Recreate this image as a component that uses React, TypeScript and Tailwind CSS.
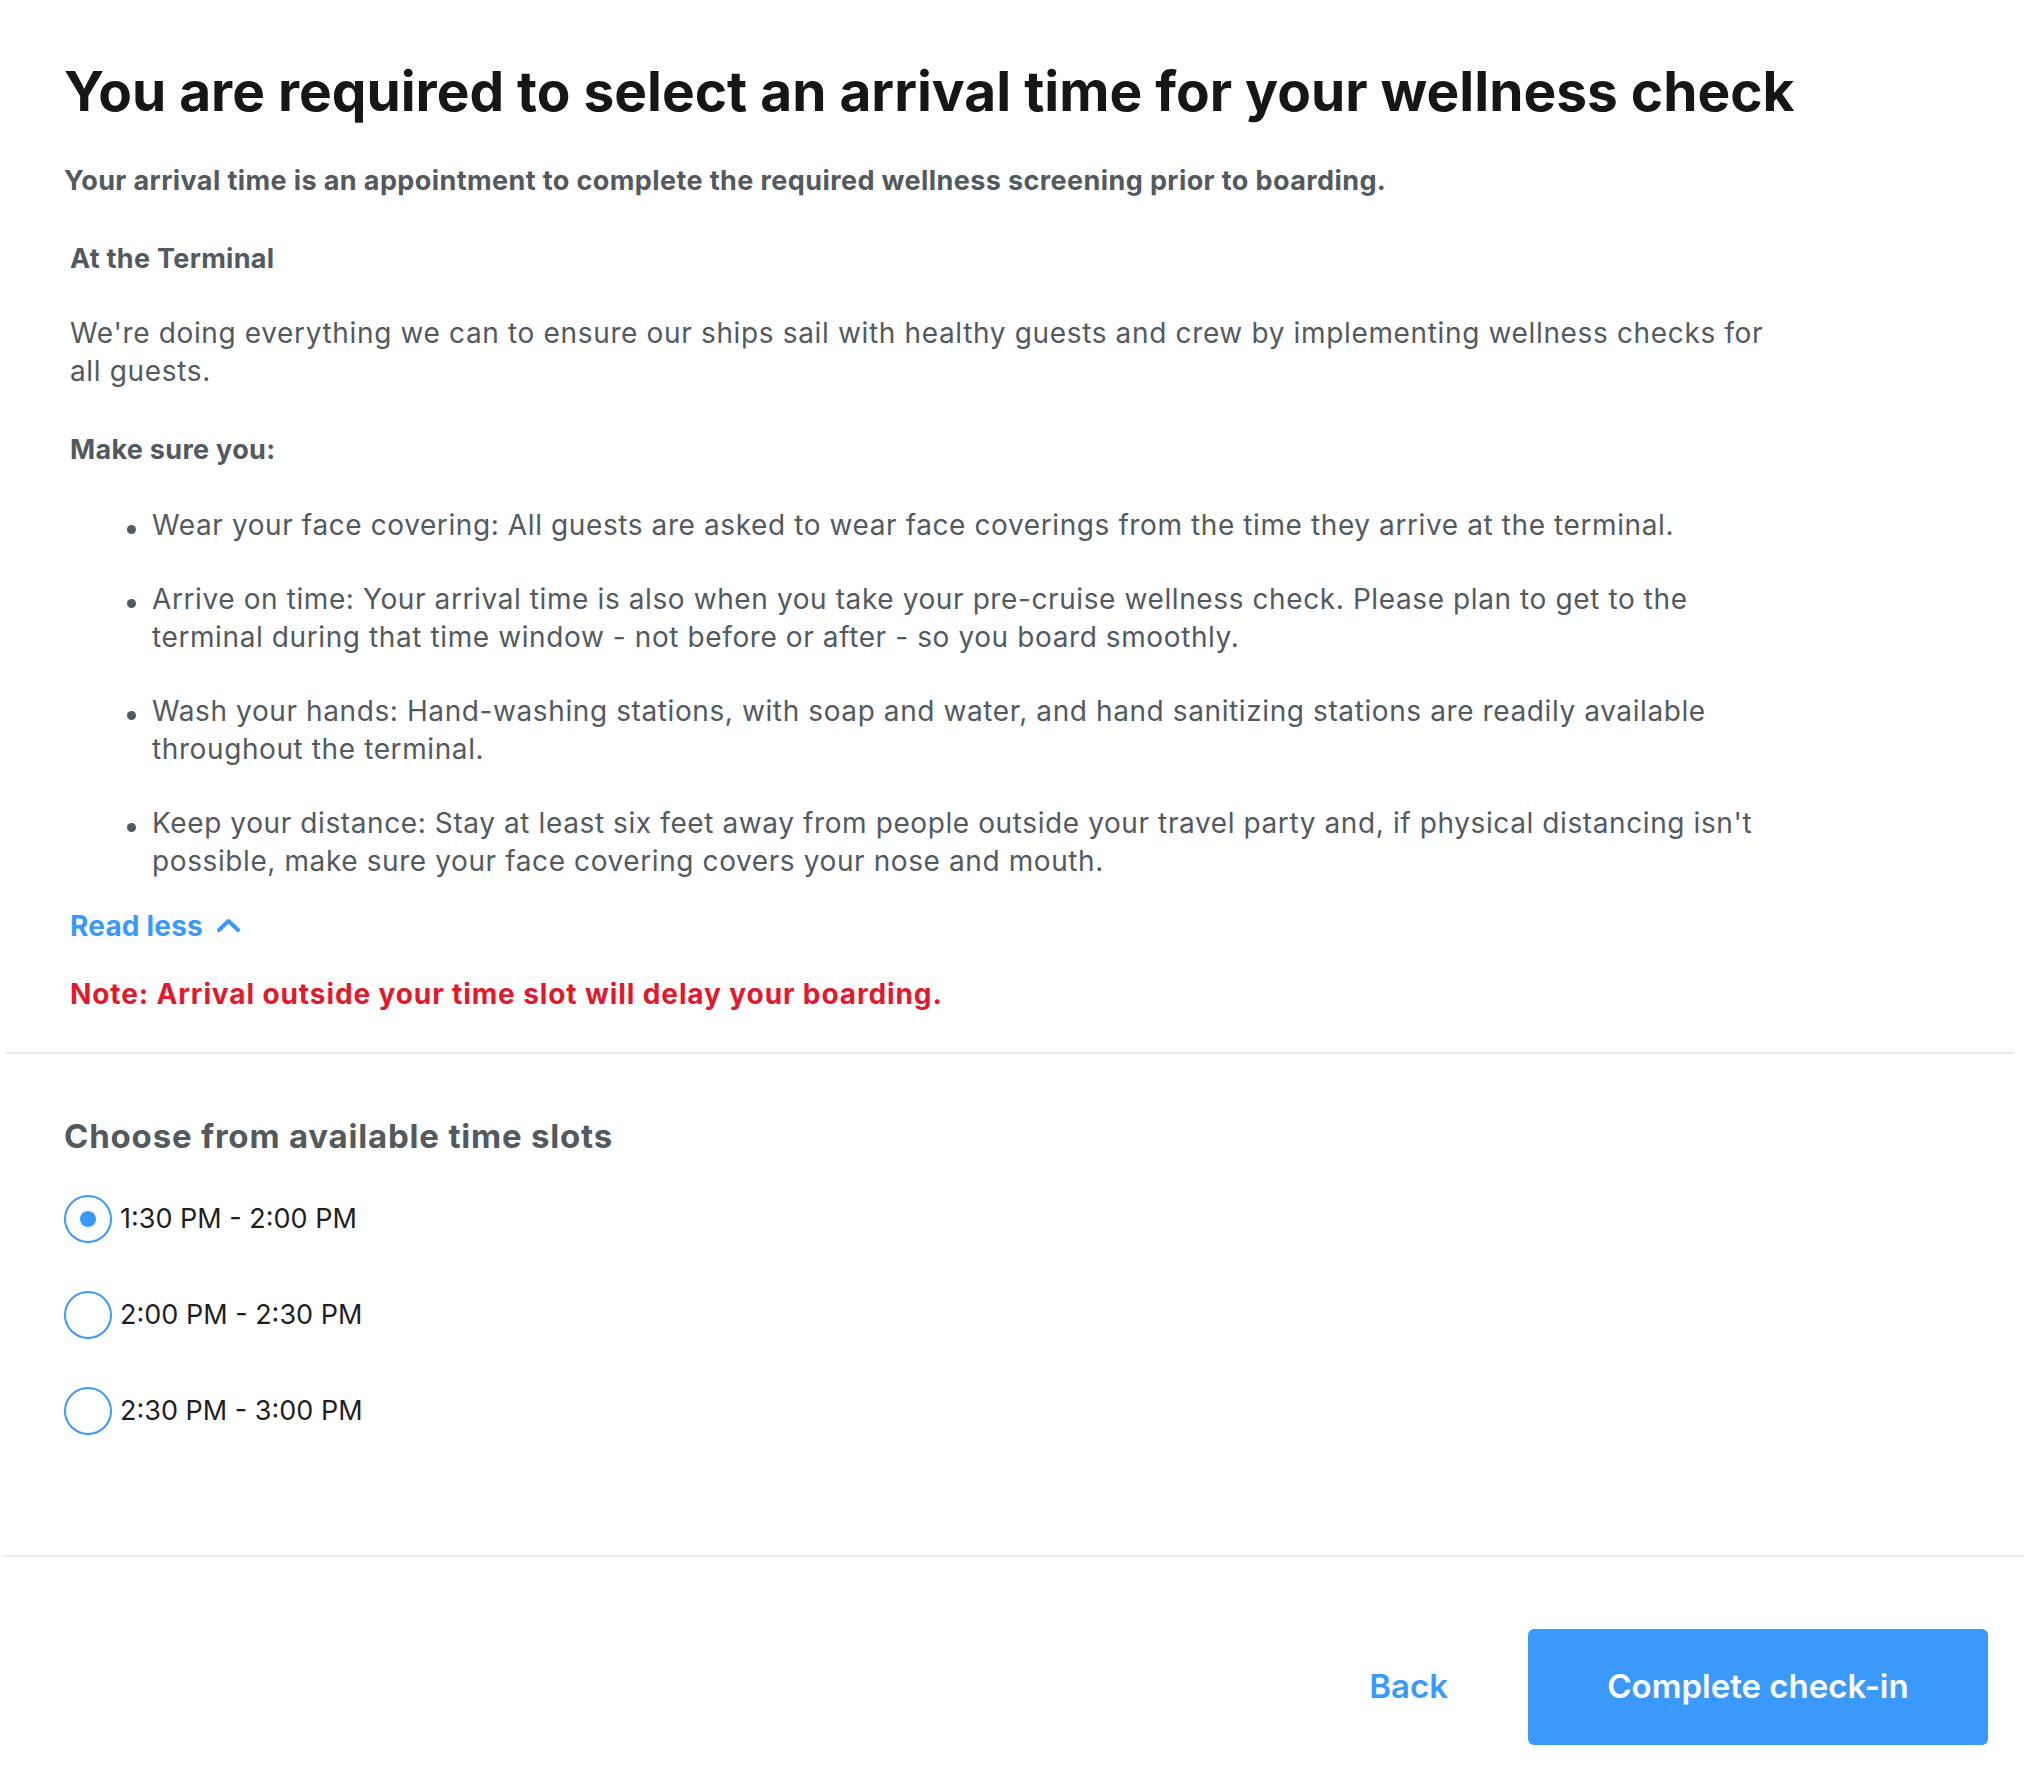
import { useState } from "react";

const SLOTS = ["1:30 PM - 2:00 PM", "2:00 PM - 2:30 PM", "2:30 PM - 3:00 PM"];

const RULES = [
  "Wear your face covering: All guests are asked to wear face coverings from the time they arrive at the terminal.",
  "Arrive on time: Your arrival time is also when you take your pre-cruise wellness check. Please plan to get to the terminal during that time window - not before or after - so you board smoothly.",
  "Wash your hands: Hand-washing stations, with soap and water, and hand sanitizing stations are readily available throughout the terminal.",
  "Keep your distance: Stay at least six feet away from people outside your travel party and, if physical distancing isn't possible, make sure your face covering covers your nose and mouth.",
];

export default function App() {
  const [slot, setSlot] = useState(SLOTS[0]);

  return (
    <div className="min-h-[1782px] w-[2024px] bg-white font-['Inter','Liberation_Sans',sans-serif] text-[#525a60]">
      <section className="pl-[64px] pr-[180px] pt-[59px]">
        <h1 className="text-[55px] font-bold leading-[64px] text-[#161617]">
          You are required to select an arrival time for your wellness check
        </h1>
        <p className="mt-[40px] text-[27px] font-bold leading-[36px] tracking-[0.4px]">
          Your arrival time is an appointment to complete the required wellness screening prior to boarding.
        </p>
      </section>

      <section className="pl-[70px] pr-[240px]">
        <h3 className="mt-[42px] text-[27px] font-bold leading-[36px] tracking-[0.3px]">At the Terminal</h3>
        <p className="mt-[37px] text-[28px] leading-[38px] tracking-[0.65px]">
          We're doing everything we can to ensure our ships sail with healthy guests and crew by implementing wellness checks for all guests.
        </p>
        <h4 className="mt-[41px] text-[27px] font-bold leading-[38px] tracking-[0.3px]">Make sure you:</h4>
        <ul className="mt-[37px] space-y-[36px] pl-[57px]">
          {RULES.map((r) => (
            <li key={r} className="flex text-[28px] leading-[38px] tracking-[0.6px]">
              <span className="mr-[16px] mt-[19px] h-[9px] w-[9px] shrink-0 rounded-full bg-[#525a60]" />
              <span>{r}</span>
            </li>
          ))}
        </ul>
        <button
          type="button"
          className="mt-[27px] flex items-center gap-[13px] text-[28px] font-bold leading-[38px] tracking-[0.2px] text-[#3b99fc]"
        >
          Read less
          <svg width="25" height="16" viewBox="0 0 25 16" fill="none" className="mt-[-2px]">
            <polyline points="3,13 12.5,4 22,13" stroke="#3b99fc" strokeWidth="4" strokeLinecap="round" strokeLinejoin="round" />
          </svg>
        </button>
        <p className="mt-[30px] text-[28px] font-bold leading-[38px] tracking-[0.9px] text-[#e2192c]">
          Note: Arrival outside your time slot will delay your boarding.
        </p>
      </section>

      <hr className="ml-[6px] mr-[10px] mt-[39px] border-t-2 border-[#e8e8e8]" />

      <section className="pl-[64px]">
        <h2 className="mt-[62px] text-[33px] font-bold leading-[40px] tracking-[0.8px]">
          Choose from available time slots
        </h2>
        <div className="mt-[39px] flex flex-col gap-[48px]">
          {SLOTS.map((s) => (
            <label key={s} className="flex cursor-pointer items-center">
              <input
                type="radio"
                name="slot"
                className="sr-only"
                checked={slot === s}
                onChange={() => setSlot(s)}
              />
              <span className="flex h-[48px] w-[48px] shrink-0 items-center justify-center rounded-full border-2 border-[#3b99fc]">
                {slot === s && <span className="h-[16px] w-[16px] rounded-full bg-[#3b99fc]" />}
              </span>
              <span className="ml-[8px] text-[27px] leading-[38px] text-[#1f1f1f]">{s}</span>
            </label>
          ))}
        </div>
      </section>

      <hr className="ml-[3px] mt-[120px] border-t-2 border-[#ececec]" />

      <footer className="mt-[72px] flex items-center justify-end gap-[80px] pr-[36px]">
        <button type="button" className="text-[33px] font-semibold text-[#3b99fc]">
          Back
        </button>
        <button
          type="button"
          className="h-[116px] w-[460px] rounded-[6px] bg-[#3b99fc] text-[33px] font-semibold text-white"
        >
          Complete check-in
        </button>
      </footer>
    </div>
  );
}
